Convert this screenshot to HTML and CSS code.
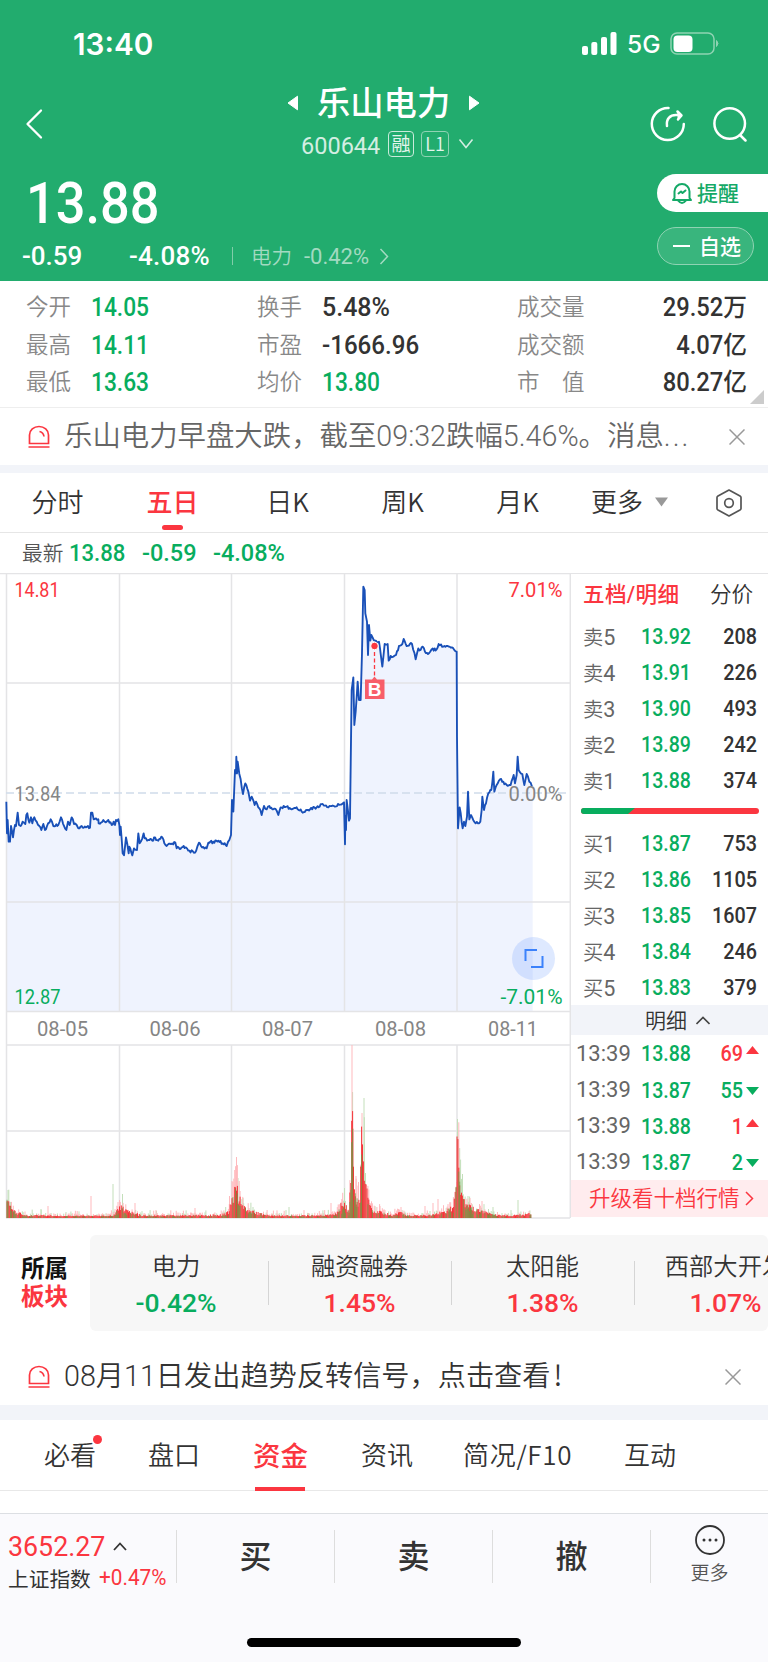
FILE: index.html
```html
<!DOCTYPE html>
<html lang="zh-CN">
<head>
<meta charset="utf-8">
<title>乐山电力 600644</title>
<link rel="stylesheet" href="styles.css">
</head>
<body>
<header class="head">
  <div class="status">
    <span class="clock">13:40</span>
    <svg class="signal" width="36" height="24" viewBox="0 0 36 24" fill="#fff"><rect x="1" y="14" width="6" height="9" rx="2"/><rect x="10.300" y="10" width="6" height="13" rx="2"/><rect x="20" y="5" width="6" height="18" rx="2"/><rect x="29.500" y="0" width="6" height="23" rx="2"/></svg>
    <span class="net">5G</span>
    <svg class="battery" width="50" height="24" viewBox="0 0 50 24"><rect x="1" y="1" width="43" height="21" rx="6" fill="none" stroke="#8fd3b3" stroke-width="1.500"/><rect x="3.500" y="3.500" width="19" height="16.500" rx="4" fill="#fff"/><path d="M46.500 8.500q3 3 0 6z" fill="#8fd3b3" stroke="#8fd3b3"/></svg>
  </div>
  <div class="nav">
    <svg class="back" width="20" height="32" viewBox="0 0 20 32" fill="none" stroke="#fff" stroke-width="2.300" stroke-linecap="round" stroke-linejoin="round"><path d="M16 2.500 2.500 16 16 29.500"/></svg>
    <div class="title">
      <div class="name"><svg width="12" height="16" viewBox="0 0 12 16"><path d="M1 8 10.500 1.200V14.800z" fill="#fff" stroke="#fff" stroke-linejoin="round"/></svg><b>乐山电力</b><svg width="12" height="16" viewBox="0 0 12 16"><path d="M11 8 1.500 1.200V14.800z" fill="#fff" stroke="#fff" stroke-linejoin="round"/></svg></div>
      <div class="code"><span class="num">600644</span><i>融</i><i class="lv">L1</i><svg width="16" height="12" viewBox="0 0 16 12" fill="none" stroke="#d3eee2" stroke-width="1.600"><path d="M1.500 1.500 8 9.500 14.500 1.500"/></svg></div>
    </div>
    <svg class="share" width="36" height="36" viewBox="0 0 36 36" fill="none" stroke="#fff" stroke-width="2.500" stroke-linecap="round" stroke-linejoin="round"><path d="M18.500 2a16 16 0 1 0 15.300 16M17 20c-1-7 3-11 9-11h4M27.500 5.500 31.500 9.500 28 13.500"/><path d="M28 6v7l3.500-3.500z" fill="#fff" stroke-width="1"/></svg>
    <svg class="search" width="36" height="36" viewBox="0 0 36 36" fill="none" stroke="#fff" stroke-width="2.500" stroke-linecap="round"><circle cx="17.700" cy="17.500" r="15.300"/><path d="M28 29 33.500 34.500"/></svg>
  </div>
  <div class="quote">
    <div class="price num n90">13.88</div>
    <div class="change"><span class="num chg">-0.59</span><span class="num pct">-4.08%</span><span class="bar"></span><span class="ind">电力</span><span class="num indp">-0.42%</span><svg width="10" height="17" viewBox="0 0 10 17" fill="none" stroke="#a3dac1" stroke-width="1.500"><path d="M1.500 1 8.500 8.500 1.500 16"/></svg></div>
  </div>
  <div class="acts">
    <div class="pill remind"><svg width="22" height="23" viewBox="0 0 22 23" fill="none" stroke="#14a967" stroke-width="2" stroke-linecap="round" stroke-linejoin="round"><path d="M3.500 16V9.500a7.500 7.500 0 0 1 15 0V16l1.500 2H2zM7 18.500q4 5 8 0M7.500 11.500l2.500-2 1.500 1.500 3-2.500"/></svg><span>提醒</span></div>
    <div class="pill fav"><span class="minus"></span><span>自选</span></div>
  </div>
</header>

<section class="stats">
  <span>今开</span><b class="num g n90">14.05</b><span>换手</span><b class="num">5.48%</b><span>成交量</span><b class="num r">29.52<em>万</em></b>
  <span>最高</span><b class="num g n90">14.11</b><span>市盈</span><b class="num n96">-1666.96</b><span>成交额</span><b class="num r">4.07<em>亿</em></b>
  <span>最低</span><b class="num g n90">13.63</b><span>均价</span><b class="num g n90">13.80</b><span>市　值</span><b class="num r">80.27<em>亿</em></b>
  <svg class="corner" width="14" height="14"><path d="M14 0V14H0z" fill="#ccc"/></svg>
</section>

<section class="alert">
  <svg width="22" height="24" viewBox="0 0 22 24" fill="none" stroke="#fb3640" stroke-width="1.700"><path d="M1.500 18.500V10a9.500 8.500 0 0 1 19 0v8.500zM.5 22h21M11.500 6.500q4 1 4.500 5"/></svg>
  <p>乐山电力早盘大跌，截至<span class="num">09:32</span>跌幅<span class="num">5.46%</span>。消息<span class="dots num">...</span></p>
  <svg class="x" width="16" height="16" viewBox="0 0 16 16" stroke="#999" stroke-width="1.500"><path d="M.5.5l15 15M15.500.5l-15 15"/></svg>
</section>

<nav class="periods">
  <span>分时</span><span class="on">五日</span><span>日K</span><span>周K</span><span>月K</span>
  <span class="more">更多<svg width="13" height="10"><path d="M0 .5H13L6.500 9.500z" fill="#999"/></svg></span>
  <svg class="hex" width="28" height="30" viewBox="0 0 28 30" fill="none" stroke="#555" stroke-width="1.700" stroke-linejoin="round"><path d="M14 2 25 8q1 .6 1 1.500v11q0 1-1 1.500L14 28 3 22q-1-.6-1-1.500v-11Q2 8.600 3 8z"/><circle cx="14" cy="15" r="4.300"/></svg>
</nav>

<div class="latest"><span>最新</span><b class="num n93">13.88</b><b class="num">-0.59</b><b class="num">-4.08%</b></div>

<main class="market">
  <svg id="chart" class="chart" width="571" height="646" viewBox="0 0 571 646">
    <path id="area" transform="translate(0 -3) scale(.33333)" fill="#eff3fe"/>
    <path fill="none" stroke="#e4e4e6" stroke-width="1.500" d="M0 .5H571M6 110H570M6 329H570M6 438.500H570M6 472H570M6 558H570M6 645H570M6.500 0V645M119.500 0V438.500M231.500 0V438.500M344.500 0V438.500M457 0V438.500M119.500 472V645M231.500 472V645M344.500 472V645M457 472V645M570.300 0V645"/>
    <path d="M6 220H570" stroke="#cfdcea" stroke-width="1.300" stroke-dasharray="8 4"/>
    <path id="volGreenLight" stroke="#c3dfba" fill="none"/>
    <path id="volRedLight" stroke="#ffb9bd" fill="none"/>
    <path id="volRed" stroke="#f5343a" fill="none"/>
    <path id="volGreen" stroke="#5fa544" fill="none" stroke-width=".7"/>
    <path id="line" transform="translate(0 -3) scale(.33333)" fill="none" stroke="#1950b8" stroke-width="5.600" stroke-linejoin="round"/>
    <g class="axis">
      <text x="14.500" y="24" fill="#fb3640" textLength="45" lengthAdjust="spacingAndGlyphs">14.81</text>
      <text x="14.500" y="227.500" fill="#858585" textLength="46" lengthAdjust="spacingAndGlyphs">13.84</text>
      <text x="14.500" y="431" fill="#08ad5e" textLength="46" lengthAdjust="spacingAndGlyphs">12.87</text>
      <text x="508.500" y="24" fill="#fb3640" textLength="54" lengthAdjust="spacingAndGlyphs">7.01%</text>
      <text x="508.500" y="227.500" fill="#858585" textLength="54" lengthAdjust="spacingAndGlyphs">0.00%</text>
      <text x="500.500" y="431" fill="#08ad5e" textLength="62" lengthAdjust="spacingAndGlyphs">-7.01%</text>
      <text x="37" y="463" fill="#858585" textLength="51" lengthAdjust="spacingAndGlyphs">08-05</text>
      <text x="149.500" y="463" fill="#858585" textLength="51" lengthAdjust="spacingAndGlyphs">08-06</text>
      <text x="262" y="463" fill="#858585" textLength="51" lengthAdjust="spacingAndGlyphs">08-07</text>
      <text x="375" y="463" fill="#858585" textLength="51" lengthAdjust="spacingAndGlyphs">08-08</text>
      <text x="488" y="463" fill="#858585" textLength="50" lengthAdjust="spacingAndGlyphs">08-11</text>
    </g>
    <path d="M374.500 79V105" stroke="#fb3640" stroke-dasharray="4 2.500" stroke-width="1.300"/>
    <circle cx="374.500" cy="73" r="3.800" fill="#fb3640" stroke="#fff" stroke-width="1"/>
    <path d="M365 106.500h7l2.500-3 2.500 3h7.500V126H365z" fill="#f85e68"/>
    <text x="374.600" y="122.500" class="buy">B</text>
    <circle cx="533.500" cy="385.500" r="21.500" fill="#5b90ff" fill-opacity=".2"/>
    <path d="M525.500 388V377H537M542.500 383V394H531" fill="none" stroke="#3b82fb" stroke-width="2"/>
  </svg>

  <aside class="book">
    <div class="btabs"><b>五档/明细</b><span>分价</span></div>
    <div class="row"><span>卖<i>5</i></span><b>13.92</b><em>208</em></div>
    <div class="row"><span>卖<i>4</i></span><b>13.91</b><em>226</em></div>
    <div class="row"><span>卖<i>3</i></span><b>13.90</b><em>493</em></div>
    <div class="row"><span>卖<i>2</i></span><b>13.89</b><em>242</em></div>
    <div class="row"><span>卖<i>1</i></span><b>13.88</b><em>374</em></div>
    <div class="ratio"><svg width="178" height="6"><rect width="178" height="6" rx="3" fill="#fb3640"/><path d="M3 0H54L47 6H3A3 3 0 0 1 3 0z" fill="#08ad5e"/></svg></div>
    <div class="row"><span>买<i>1</i></span><b>13.87</b><em>753</em></div>
    <div class="row"><span>买<i>2</i></span><b>13.86</b><em>1105</em></div>
    <div class="row"><span>买<i>3</i></span><b>13.85</b><em>1607</em></div>
    <div class="row"><span>买<i>4</i></span><b>13.84</b><em>246</em></div>
    <div class="row"><span>买<i>5</i></span><b>13.83</b><em>379</em></div>
    <div class="detail"><span>明细</span><svg width="14" height="9" viewBox="0 0 14 9" fill="none" stroke="#444" stroke-width="1.600"><path d="M.5 8 7 1.500 13.500 8"/></svg></div>
    <div class="row tick"><span>13:39</span><b>13.88</b><em class="up">69</em><svg width="13" height="8"><path d="M0 8 6.500 0 13 8z" fill="#fb3640"/></svg></div>
    <div class="row tick"><span>13:39</span><b>13.87</b><em class="down">55</em><svg class="dn" width="13" height="8"><path d="M0 0H13L6.500 8z" fill="#08ad5e"/></svg></div>
    <div class="row tick"><span>13:39</span><b>13.88</b><em class="up">1</em><svg width="13" height="8"><path d="M0 8 6.500 0 13 8z" fill="#fb3640"/></svg></div>
    <div class="row tick"><span>13:39</span><b>13.87</b><em class="down">2</em><svg class="dn" width="13" height="8"><path d="M0 0H13L6.500 8z" fill="#08ad5e"/></svg></div>
    <div class="upgrade"><span>升级看十档行情</span><svg width="9" height="15" viewBox="0 0 9 15" fill="none" stroke="#fb3640" stroke-width="1.500"><path d="M1 1 7.500 7.500 1 14"/></svg></div>
  </aside>
</main>

<section class="sector">
  <div class="slabel"><span>所属</span><span class="red">板块</span></div>
  <div class="cells">
    <div><span>电力</span><b class="num g">-0.42%</b></div>
    <div><span>融资融券</span><b class="num">1.45%</b></div>
    <div><span>太阳能</span><b class="num">1.38%</b></div>
    <div><span>西部大开发</span><b class="num">1.07%</b></div>
  </div>
</section>

<section class="alert second">
  <svg width="22" height="24" viewBox="0 0 22 24" fill="none" stroke="#fb3640" stroke-width="1.700"><path d="M1.500 18.500V10a9.500 8.500 0 0 1 19 0v8.500zM.5 22h21M11.500 6.500q4 1 4.500 5"/></svg>
  <p><span class="num">08</span>月<span class="num">11</span>日发出趋势反转信号，点击查看<span class="excl">!</span></p>
  <svg class="x" width="16" height="16" viewBox="0 0 16 16" stroke="#999" stroke-width="1.500"><path d="M.5.5l15 15M15.500.5l-15 15"/></svg>
</section>

<nav class="sections">
  <span class="dot">必看</span><span>盘口</span><span class="on">资金</span><span>资讯</span><span class="wide">简况/F10</span><span>互动</span>
</nav>

<footer class="foot">
  <div class="trade">
    <div class="index"><div class="iv"><b class="num n96">3652.27</b><svg width="14" height="9" viewBox="0 0 14 9" fill="none" stroke="#333" stroke-width="1.800"><path d="M1 8 7 1.500 13 8"/></svg></div><div class="in">上证指数<b class="num n96">+0.47%</b></div></div>
    <div class="btn">买</div><div class="btn">卖</div><div class="btn">撤</div>
    <div class="others"><svg width="32" height="32" viewBox="0 0 32 32"><circle cx="16" cy="16" r="14" fill="none" stroke="#333" stroke-width="1.800"/><g fill="#333"><circle cx="10" cy="16" r="1.500"/><circle cx="16" cy="16" r="1.500"/><circle cx="22" cy="16" r="1.500"/></g></svg>更多</div>
  </div>
  <div class="home"></div>
</footer>
<script src="chart.js"></script>
</body>
</html>
```
FILE: styles.css
```css
* { box-sizing: border-box; }
body { margin: 0; width: 768px; height: 1662px; overflow: hidden; background: #fff; color: #333; font-family: "Noto Sans CJK SC", sans-serif; font-weight: 350; }
svg { display: block; flex: none; }
b, i, em { font-weight: inherit; font-style: normal; }
.num { font-family: Roboto, "Noto Sans CJK SC", sans-serif; font-weight: 500; white-space: nowrap; transform-origin: 0 50%; }
.n90 { transform: scaleX(.91); }
.n93 { transform: scaleX(.94); }
.n96 { transform: scaleX(.965); }

.head { position: relative; height: 281px; background: #22ac6e; color: #fff; }
.status { display: flex; align-items: center; height: 87px; padding-left: 73px; }
.clock { width: 508px; font: 600 29.700px Inter, sans-serif; }
.net { width: 43px; margin-left: 10px; font: 500 24.500px Inter, sans-serif; }
.nav { display: flex; height: 75px; }
.back { margin: 21px 0 0 25px; }
.title { margin-left: 166px; width: 346px; padding-left: 76px; }
.name { display: flex; align-items: center; height: 32px; gap: 19px; }
.name b { font-size: 33.300px; font-weight: 500; line-height: 32px; margin: -4px -1px 0; white-space: nowrap; }
.code { display: flex; align-items: center; height: 28px; margin-top: 11px; padding-left: 14px; }
.code .num { width: 87px; font-size: 24.500px; font-weight: 400; color: #d3eee2; transform: scaleX(.96); margin-top: 2px; }
.code i { width: 26px; height: 26px; border: 1.500px solid #c9ebdb; border-radius: 4px; font-size: 19px; line-height: 22px; text-align: center; color: #e4f5ed; font-weight: 400; }
.code i.lv { width: 28px; margin: 0 9px 0 7px; font-size: 18px; border-color: #8fd3b3; font-weight: 350; }
.share { margin: 19px 0 0 93px; }
.search { margin: 19px 0 0 26px; }
.quote { padding: 10px 0 0 26px; }
.price { height: 64px; font-size: 57.500px; line-height: 64px; }
.change { display: flex; align-items: center; height: 34px; margin: 3px 0 0 -4px; }
.chg { width: 107px; font-size: 26px; }
.pct { width: 103px; font-size: 26px; letter-spacing: .2px; }
.bar { width: 1px; height: 18px; background: #80cda9; margin-right: 18px; }
.ind { width: 53px; font-size: 20.500px; color: #a3dac1; margin-top: -3px; }
.indp { width: 75px; font-size: 22px; color: #a3dac1; font-weight: 400; }
.acts { position: absolute; right: 0; top: 174px; width: 111px; }
.pill { display: flex; align-items: center; height: 38px; border-radius: 19px; font-size: 21px; font-weight: 500; }
.pill span { margin-top: -2px; }
.pill span.minus { margin-top: 0; }
.remind { background: #fff; color: #14a967; border-radius: 19px 0 0 19px; padding-left: 14px; gap: 4px; }
.fav { width: 97px; margin-top: 15px; border: 1px solid #8fd3b3; background: #39b57d; padding-left: 15px; gap: 9px; }
.minus { width: 17px; height: 2px; background: #fff; }

.stats { position: relative; display: grid; grid-template-columns: 65px 166px 65px 195px 101px 129px; grid-auto-rows: 37.700px; height: 127px; padding: 7px 0 0 26px; border-bottom: 1.500px solid #eee; align-items: center; }
.stats span { font-size: 22.500px; line-height: 36px; color: #888; margin-top: -4px; }
.stats .num { font-size: 25px; line-height: 36px; margin-top: 2px; }
.stats em { font-size: 25px; line-height: 20px; font-weight: 500; }
.stats .r { text-align: right; transform: scaleX(.95); transform-origin: 100% 50%; }
.num.g { color: #08ad5e; }
.corner { position: absolute; right: 4px; bottom: 3px; }

.alert { display: flex; align-items: center; height: 57px; padding-left: 28px; color: #666; }
.alert p { margin: -3px 0 0 14px; width: 665px; font-size: 28.400px; line-height: 40px; white-space: nowrap; }
.alert .num { font-weight: 350; font-size: 28.700px; }
.dots { letter-spacing: 2px; }

.periods { display: grid; grid-template-columns: 115px 115px 115px 115px 115px 140px 28px; align-items: center; height: 68px; border-top: 8px solid #f2f4f9; border-bottom: 1.500px solid #e6e6e6; font-size: 26px; text-align: center; }
.periods span { margin-top: -4px; }
.periods .on { position: relative; color: #fb3640; font-weight: 500; }
.periods .on::after { content: ""; position: absolute; left: 47px; bottom: -11px; width: 21px; height: 5px; border-radius: 3px; background: #fb3640; }
.more { display: flex; align-items: center; gap: 12px; padding-left: 16px; }
.more svg { margin-top: 3px; }

.latest { display: flex; align-items: center; height: 40px; padding-left: 22px; font-size: 20.700px; color: #555; }
.latest span { width: 47px; margin-top: -3px; }
.latest .num { width: 71px; font-size: 23.500px; color: #08ad5e; }
.latest .num.n93 { width: 73px; }

.market { display: flex; height: 645px; }
.axis { font: 500 20.500px Roboto, sans-serif; }
.axis text { font-weight: 450; }
.buy { font: 700 19px "Liberation Sans", sans-serif; fill: #fff; text-anchor: middle; }
.book { width: 197px; border-top: 1.500px solid #e4e4e6; font-family: Roboto, "Noto Sans CJK SC", sans-serif; }
.btabs { display: flex; height: 43.500px; padding-left: 12px; font-size: 21.600px; line-height: 42px; }
.btabs b { width: 127px; color: #fb3640; font-weight: 500; letter-spacing: .3px; }
.row { display: grid; grid-template-columns: 58px 60px 56px; align-items: center; height: 36.100px; padding-left: 12px; font-size: 22.500px; font-weight: 500; }
.row span { font-size: 20.300px; color: #666; font-weight: 350; white-space: nowrap; }
.row i { font-size: 21.500px; font-weight: 400; }
.row b { color: #08ad5e; transform: scaleX(.87); transform-origin: 0 50%; }
.row em { text-align: right; transform: scaleX(.88); transform-origin: 100% 50%; }
.ratio { height: 27px; padding: 10px 0 0 10px; }
.detail { display: flex; align-items: center; height: 30px; padding-left: 74px; gap: 9px; background: #f2f4f9; font-size: 21px; }
.detail span, .upgrade span { margin-top: -3px; }
.row.tick { grid-template-columns: 65px 60px 42px 13px; padding-left: 5px; }
.tick span { font-size: 22px; font-weight: 400; }
.tick svg { margin: -6px 0 0 3px; }
.tick svg.dn { margin-top: 3px; }
.row .up { color: #fb3640; }
.row .down { color: #08ad5e; }
.upgrade { display: flex; align-items: center; height: 37px; padding-left: 18px; gap: 5px; background: #ffecee; color: #fb3640; font-size: 21.500px; }

.sector { display: flex; height: 130px; padding-top: 17px; }
.slabel { display: flex; flex-direction: column; width: 90px; padding: 18px 0 0 21px; font-size: 23.500px; line-height: 28px; font-weight: 700; color: #111; }
.slabel .red { color: #fb3640; }
.cells { display: flex; width: 678px; height: 96px; border-radius: 6px; background: #f7f7f7; overflow: hidden; }
.cells div { position: relative; flex: none; display: flex; flex-direction: column; align-items: center; width: 183px; padding-top: 13px; font-size: 24.300px; line-height: 34px; white-space: nowrap; }
.cells div:first-child { width: 178px; padding-right: 6px; }
.cells div + div::before { content: ""; position: absolute; left: 0; top: 26px; width: 1px; height: 44px; background: #d5d5d5; }
.cells .num { font-size: 26.500px; line-height: 36px; margin-top: 3px; color: #fb3640; }
.cells .num.g { color: #08ad5e; }
.second { color: #333; }
.second p { width: 661px; font-size: 28.200px; }
.excl { margin-left: 3px; }

.sections { display: grid; grid-template-columns: 104px 105px 108px 102px 161px 60px; align-items: center; height: 86px; border-top: 15px solid #f2f4f9; border-bottom: 1px solid #e8e8e8; font-size: 26px; white-space: nowrap; padding-left: 44px; }
.sections span { position: relative; line-height: 66px; margin-top: -3px; }
.sections .wide { letter-spacing: .7px; }
.sections .on { color: #fb3640; font-weight: 500; font-size: 27.500px; }
.sections .on::after { content: ""; position: absolute; left: 2px; bottom: -4px; width: 50px; height: 4px; background: #fb3640; }
.dot::after { content: ""; position: absolute; left: 49px; top: 14px; width: 9px; height: 9px; border-radius: 50%; background: #fb3640; }

.foot { margin-top: 22px; height: 150px; background: #fafafd; border-top: 1.500px solid #dcdfe3; }
.trade { display: flex; height: 86px; padding-top: 16px; }
.index { width: 176px; padding-left: 8px; }
.iv { display: flex; align-items: center; gap: 7px; height: 33px; }
.iv .num { width: 98px; font-size: 28.500px; line-height: 32px; color: #fb3640; font-weight: 400; transform: scaleX(.94); }
.in { display: flex; align-items: center; gap: 8px; font-size: 20.700px; line-height: 30px; font-weight: 400; white-space: nowrap; }
.in .num { font-size: 21.500px; color: #fb3640; font-weight: 400; }
.btn { width: 158px; height: 53px; border-left: 1px solid #ddd; font-size: 32px; line-height: 49px; font-weight: 500; text-align: center; }
.others { display: flex; flex-direction: column; align-items: center; width: 118px; height: 53px; border-left: 1px solid #ddd; font-size: 19px; line-height: 28px; color: #555; }
.others svg { margin: -6px 0 2px; }
.home { width: 274px; height: 9px; margin: 38px 0 0 247px; border-radius: 5px; background: #000; }
```
FILE: chart.js
```js
// Price curve, in thirds of a pixel.
const price = "19,695 21,790 23,750 26,815 30,815 33,768 39,802 45,765 48,768 53,728 57,765 62,768 68,755 76,762 79,735 82,730 88,758 93,742 97,760 103,742 110,755 118,768 124,780 130,762 135,780 141,768 152,748 160,768 175,765 183,742 192,768 199,780 204,755 209,765 215,742 222,762 230,765 235,775 245,768 270,773 273,728 277,728 281,748 295,748 296,760 310,750 320,755 325,750 335,765 341,755 345,765 348,750 355,748 358,765 360,795 362,770 368,850 372,856 378,802 386,850 388,830 397,856 402,835 411,840 415,790 419,820 427,805 431,790 434,805 445,810 460,812 462,802 475,812 487,802 493,820 500,828 526,818 530,835 545,832 557,832 565,842 585,848 592,830 597,818 603,828 620,835 625,818 640,815 655,812 668,820 680,828 688,810 693,795 696,690 700,725 705,600 708,610 709,560 711,610 713,575 718,612 722,628 729,672 736,640 745,665 750,692 755,680 764,705 768,695 778,715 785,735 792,708 800,718 808,708 820,718 830,722 835,735 842,712 860,710 875,718 890,712 905,725 930,718 950,712 968,702 985,712 1005,710 1032,697 1035,823 1036,740 1038,780 1040,690 1047,752 1050,745 1055,360 1060,322 1063,465 1067,425 1073,335 1077,390 1082,390 1086,250 1090,50 1094,60 1096,130 1101,155 1104,255 1107,165 1111,212 1114,195 1125,212 1137,215 1140,235 1147,290 1154,222 1163,222 1166,272 1172,258 1180,260 1188,255 1197,228 1207,222 1211,207 1220,228 1236,222 1247,268 1255,235 1262,240 1268,230 1275,245 1287,250 1295,238 1310,238 1316,222 1330,230 1355,232 1370,245 1371,500 1374,775 1379,712 1388,775 1392,755 1396,768 1401,740 1404,665 1408,748 1413,735 1427,760 1441,755 1445,720 1447,680 1452,720 1458,700 1465,670 1474,660 1480,605 1483,665 1490,645 1500,628 1510,635 1520,645 1532,645 1541,615 1545,640 1550,615 1553,560 1556,600 1567,612 1573,645 1580,612 1588,635 1596,650"
  .split(" ").map(p => p.split(",").map(Number));

let seed = 20;
const rand = () => (seed = (seed * 1103515245 + 12345) % 2147483648) / 2147483648;

// Small ticks between the key points.
const pts = [price[0]];
for (let i = 1; i < price.length; i++) {
  const [x0, y0] = price[i - 1], [x1, y1] = price[i];
  const n = Math.floor((x1 - x0) / 3);
  for (let k = 1; k < n; k++) {
    pts.push([x0 + (x1 - x0) * k / n, y0 + (y1 - y0) * k / n + (rand() - .5) * 9]);
  }
  pts.push([x1, y1]);
}
const d = "M" + pts.map(p => p.map(v => v.toFixed(1)).join(" ")).join("L");
document.getElementById("line").setAttribute("d", d);
document.getElementById("area").setAttribute("d", d + "L1598 655V1324H19Z");

// Volume envelope: x, typical height.
const env = [[6,24],[9,18],[12,9],[20,5],[28,3],[40,3],[60,2.5],[112,2.5],[116,7],[120,12],[123,12],[128,7],[136,5],[142,2.5],[222,3.5],[229,7],[231,20],[234,30],[236,48],[238,30],[241,16],[246,11],[252,7],[262,5],[270,2.5],[320,3],[335,4],[341,14],[345,15],[349,6],[351,60],[352,125],[353.5,85],[355,30],[358,22],[360,15],[361.500,85],[363,100],[365,50],[367,28],[370,12],[376,7],[385,6],[392,3],[400,6],[408,3],[430,3],[445,7],[453,14],[456,35],[457.500,100],[459,60],[461,32],[464,18],[470,13],[480,10],[486,6],[500,3],[510,2.5],[532,5]];
const light = { volRedLight: [[91,22],[118,16],[48,12],[135,15],[156,8],[195,10],[229.500,22],[232,37],[236.500,61],[331,15],[342,16],[352,173],[356,42],[358.500,36],[362,105],[380,12],[401,11],[425,12],[438,19],[433,15],[457,36],[482,17],[470,20]],
  volGreenLight: [[8,28],[41,9],[66,6],[113,34],[122.500,24],[238,40],[243,20],[253,11],[289,11],[344.500,30],[352.500,126],[364,120],[365.500,45],[457.500,99],[460.500,48],[462.500,44],[468,22],[518,18],[493,11]] };
const vol = { volRed: "", volGreen: "", volRedLight: "", volGreenLight: "" };
const bar = (k, x, h) => { vol[k] += `M${x.toFixed(1)} 645V${(645 - h).toFixed(1)}`; };
let e = 0;
for (let x = 7; x < 531; x += .9) {
  while (env[e + 1][0] < x) e++;
  const [a, ha] = env[e], [b, hb] = env[e + 1];
  const h = ha + (hb - ha) * (x - a) / (b - a);
  bar("volRed", x, Math.max(1.800, h * (.5 + .6 * rand())));
  if (rand() > .55) bar("volGreen", x, h * (.3 + .6 * rand()));
  if (rand() > .5) bar(rand() > .3 ? "volRedLight" : "volGreenLight", x, h * (1 + .5 * rand()) + (rand() > .85 ? 4 : 1));
}
for (const k in light) light[k].forEach(([x, h]) => bar(k, x, h));
for (const k in vol) document.getElementById(k).setAttribute("d", vol[k]);
```
